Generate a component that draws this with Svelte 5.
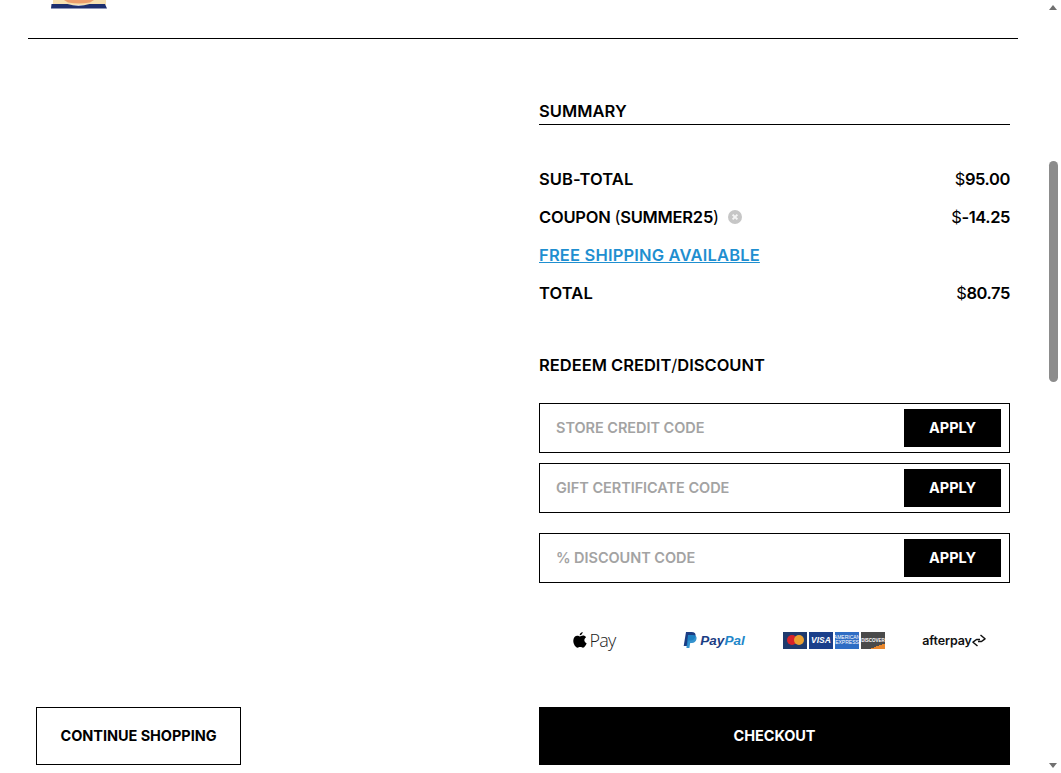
<script lang="ts">
	const totals = [
		{ label: 'SUB-TOTAL', amount: '95.00' },
		{ label: 'COUPON', coupon: 'SUMMER25', amount: '-14.25' },
		{ label: 'FREE SHIPPING AVAILABLE', link: true },
		{ label: 'TOTAL', amount: '80.75' }
	];
	const codes = ['STORE CREDIT CODE', 'GIFT CERTIFICATE CODE', '% DISCOUNT CODE'];
</script>

<div class="page">
	<header class="top">
		<svg class="logo" width="58" height="10" viewBox="0 0 58 10">
			<path d="M3 0h53v5H3z" fill="#f6e0b0" />
			<path d="M14 0h30l-4 2.500q-11 2-22 0z" fill="#ec9e6c" />
			<path d="M1.500 4h16q11 3.500 22 0h15.500l2 4.500H1z" fill="#1d2f6f" />
		</svg>
	</header>

	<main class="columns">
		<div class="left"></div>
		<section class="summary">
			<h2 class="heading">SUMMARY</h2>
			<div class="totals">
				{#each totals as row}
					<div class="row">
						{#if row.link}
							<a class="link" href="#shipping">{row.label}</a>
						{:else}
							<span class="label" class:coupon={row.coupon}>
								{row.label}
								{#if row.coupon}
									<span class="thin">(</span>{row.coupon}<span class="thin">)</span>
									<svg class="remove" width="14" height="14" viewBox="0 0 14 14">
										<circle cx="7" cy="7" r="7" fill="#c6c6c6" />
										<path d="M4.600 4.600l4.800 4.800M9.400 4.600l-4.800 4.800" stroke="#f4f4f4" stroke-width="2" />
									</svg>
								{/if}
							</span>
							<span class="amount"><span class="thin">$</span>{row.amount}</span>
						{/if}
					</div>
				{/each}
			</div>

			<h2 class="redeem">REDEEM CREDIT<span class="thin">/</span>DISCOUNT</h2>
			<div class="codes">
				{#each codes as code}
					<div class="code">
						<span class="placeholder">{code}</span>
						<button class="apply">APPLY</button>
					</div>
				{/each}
			</div>

			<div class="payments">
				<div class="pay">
					<svg width="14" height="17" viewBox="0 0 15 18">
						<path d="M10.400 0c.1 1.500-1.200 3.400-3.200 3.500C7 2 8.500.2 10.400 0zM7.300 4.600c.8 0 1.900-.9 3.400-.9 1.400 0 2.600.7 3.300 1.800-2.700 1.600-2.300 5.300.6 6.500-.7 1.900-2.200 4.700-3.900 4.700-1.100 0-1.500-.7-2.900-.7s-1.900.7-2.900.7C2.800 16.700.3 12.700.3 9.300c0-3.300 2.100-5.400 4.300-5.400 1.200 0 2.100.7 2.700.7z" fill="#000" />
					</svg>
					<span class="apple-pay">Pay</span>
				</div>
				<div class="pay">
					<svg width="14" height="16" viewBox="0 0 14 16">
						<path d="M3 0h5.500C11.500 0 13 1.500 12.500 4 12 7 10 8.500 7.500 8.500H5.400L4.500 14H0.700z" fill="#1b3d84" />
						<path d="M5 3h5c2.500 0 4 1.500 3.500 4-.5 2.500-2.500 4-4.500 4H7.200l-.8 5H3.400z" fill="#1f87c9" opacity="0.9" />
					</svg>
					<span class="paypal">Pay<span class="pal">Pal</span></span>
				</div>
				<div class="pay cards">
					<span class="card mc">
						<i class="dot red"></i><i class="dot amber"></i>
					</span>
					<span class="card visa">VISA</span>
					<span class="card amex">AMERICAN EXPRESS</span>
					<span class="card disc">DISCOVER</span>
				</div>
				<div class="pay tight">
					<span class="afterpay">afterpay</span>
					<svg width="14" height="13" viewBox="0 0 14 13">
						<path d="M8.500 1l4.500 3.800-3.500 2.700H6M5.500 12L1 8.200l3.500-2.700H8" fill="none" stroke="#111" stroke-width="1.500" stroke-linejoin="round" />
					</svg>
				</div>
			</div>
		</section>
	</main>

	<footer class="actions">
		<div class="left-action">
			<button class="continue">CONTINUE SHOPPING</button>
		</div>
		<button class="checkout">CHECKOUT</button>
	</footer>

	<div class="scrollbar" aria-hidden="true">
		<i class="arrow up"></i>
		<i class="thumb"></i>
		<i class="arrow down"></i>
	</div>
</div>

<style>
	:global(body) {
		margin: 0;
		background: #fff;
	}
	.page {
		position: relative;
		width: 1061px;
		height: 773px;
		overflow: hidden;
		box-sizing: border-box;
		font-family: Inter, 'Liberation Sans', sans-serif;
		font-size: 16.500px;
		font-weight: 600;
		letter-spacing: 0.1px;
		color: #000;
	}
	.top {
		width: 990px;
		height: 38px;
		margin-left: 28px;
		border-bottom: 1px solid #000;
	}
	.logo {
		display: block;
		margin-left: 22px;
	}
	.columns {
		display: grid;
		grid-template-columns: 511px 471px;
		margin: 0 0 0 28px;
	}
	.summary {
		padding-top: 63px;
	}
	.heading {
		margin: 0;
		font: inherit;
		letter-spacing: 0.05px;
		line-height: 19px;
		height: 22px;
		border-bottom: 1px solid #000;
	}
	.totals {
		margin-top: 35px;
	}
	.row {
		display: flex;
		justify-content: space-between;
		align-items: center;
		height: 38px;
	}
	.label {
		display: flex;
		align-items: center;
		white-space: pre-wrap;
	}
	.coupon {
		letter-spacing: -0.23px;
	}
	.amount {
		letter-spacing: -0.4px;
	}
	.thin {
		font-weight: 400;
	}
	.remove {
		margin-left: 10px;
		margin-right: -1px;
		transform: translateX(-1px);
	}
	.link {
		color: #1f8fd0;
		letter-spacing: 0.18px;
		text-decoration: underline;
	}
	.redeem {
		margin: 43px 0 0;
		font: inherit;
		letter-spacing: 0;
		line-height: 20px;
	}
	.codes {
		margin-top: 28px;
		display: flex;
		flex-direction: column;
		gap: 10px;
	}
	.code {
		box-sizing: border-box;
		height: 50px;
		border: 1px solid #000;
		display: flex;
		align-items: center;
		justify-content: space-between;
		padding: 0 8px 0 16px;
	}
	.code:last-child {
		margin-top: 10px;
	}
	.placeholder {
		color: #a3a3a3;
		font-size: 14.500px;
		letter-spacing: -0.05px;
		padding-bottom: 2px;
	}
	button {
		border: 0;
		font-family: inherit;
		font-weight: 700;
		font-size: 14.500px;
		letter-spacing: -0.05px;
		border-radius: 0;
		padding: 0 0 2px;
	}
	.apply {
		width: 97px;
		height: 38px;
		background: #000;
		color: #fff;
	}
	.payments {
		display: grid;
		grid-template-columns: repeat(4, 120px);
		margin: 43px 0 0 -5px;
		height: 28px;
	}
	.pay {
		display: flex;
		align-items: center;
		justify-content: center;
		gap: 3px;
	}
	.apple-pay {
		font-family: 'Open Sans', sans-serif;
		font-size: 18px;
		font-weight: 300;
		letter-spacing: -0.8px;
		color: #222;
	}
	.paypal {
		font-family: 'Liberation Sans', sans-serif;
		font-size: 13.500px;
		font-weight: 700;
		font-style: italic;
		color: #1b3d84;
		letter-spacing: 0;
	}
	.pal {
		color: #1f87c9;
	}
	.cards {
		gap: 2px;
	}
	.card {
		display: flex;
		align-items: center;
		justify-content: center;
		width: 24px;
		height: 17px;
		overflow: hidden;
		text-align: center;
		font-family: 'Liberation Sans', sans-serif;
		font-size: 8.500px;
		font-weight: 700;
		line-height: 5px;
		letter-spacing: 0;
		color: #fff;
	}
	.mc {
		background: #1f3a6e;
	}
	.dot {
		width: 10px;
		height: 10px;
		border-radius: 50%;
	}
	.red {
		background: #d8232a;
	}
	.amber {
		background: #eba030;
		margin-left: -3px;
	}
	.visa {
		background: #1a3f8b;
		font-style: italic;
	}
	.amex {
		background: #2f6dc4;
		font-size: 5px;
		font-weight: 400;
	}
	.disc {
		background: linear-gradient(160deg, #4a4a4a 78%, #e8872d 78%);
		font-size: 4.500px;
	}
	.tight {
		gap: 0;
	}
	.afterpay {
		font-size: 12.500px;
		font-weight: 600;
		letter-spacing: -0.15px;
		color: #111;
	}
	.actions {
		display: grid;
		grid-template-columns: 503px 471px;
		margin: 53px 0 0 36px;
	}
	.left-action {
		display: flex;
	}
	.continue {
		box-sizing: border-box;
		width: 205px;
		height: 58px;
		background: #fff;
		border: 1px solid #000;
		color: #000;
	}
	.checkout {
		height: 58px;
		background: #000;
		color: #fff;
	}
	/* drawn over the page edge, the window scrollbar */
	.scrollbar {
		position: absolute;
		top: 0;
		right: 0;
		width: 15px;
		height: 773px;
	}
	.arrow {
		position: absolute;
		left: 3px;
		width: 0;
		height: 0;
		border-left: 4.500px solid transparent;
		border-right: 4.500px solid transparent;
	}
	.up {
		top: 5px;
		border-bottom: 5px solid #707070;
	}
	.down {
		bottom: 5px;
		border-top: 5px solid #707070;
	}
	.thumb {
		position: absolute;
		top: 161px;
		left: 3px;
		width: 9px;
		height: 221px;
		border-radius: 5px;
		background: #8c8c8c;
	}
</style>
